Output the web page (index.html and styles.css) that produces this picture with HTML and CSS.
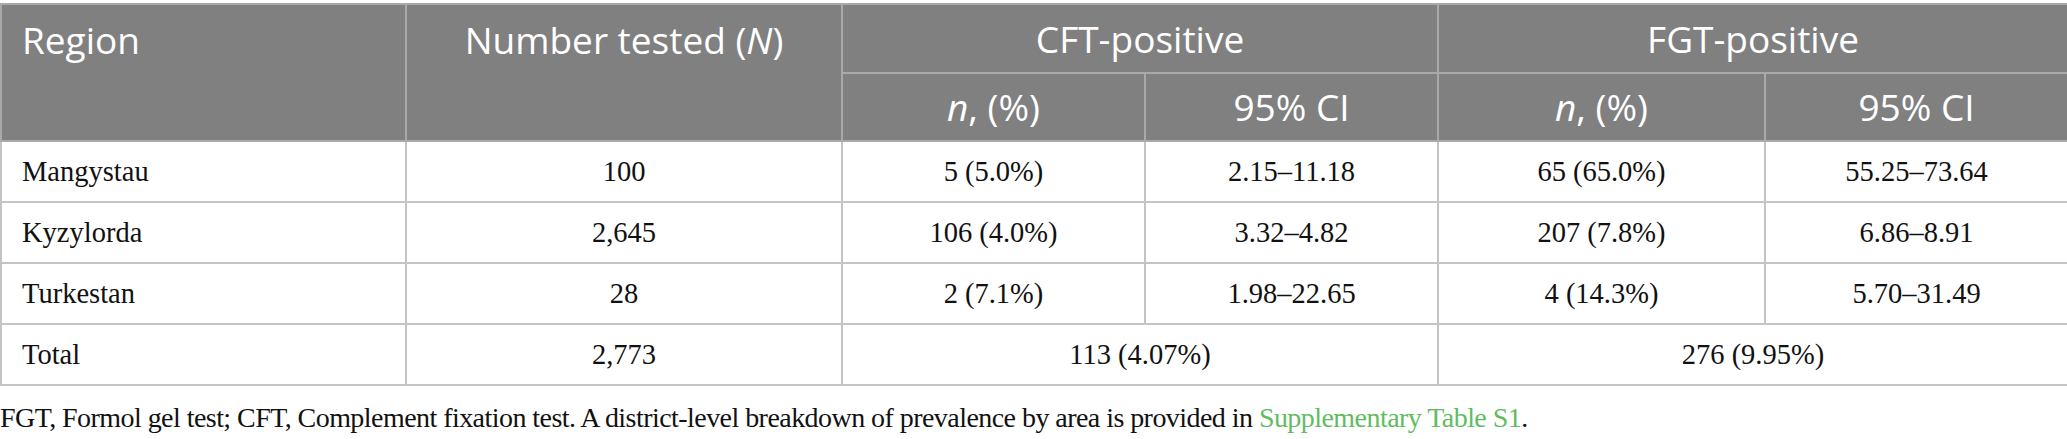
FILE: index.html
```html
<!DOCTYPE html>
<html lang="en">
<head>
<meta charset="utf-8">
<title>Table</title>
<link rel="stylesheet" href="styles.css">
</head>
<body>
<table class="data">
  <colgroup>
    <col class="c1"><col class="c2"><col class="c3"><col class="c4"><col class="c5"><col class="c6">
  </colgroup>
  <thead>
    <tr class="h1">
      <th rowspan="2" class="left top">Region</th>
      <th rowspan="2" class="top">Number tested (<i>N</i>)</th>
      <th colspan="2">CFT-positive</th>
      <th colspan="2">FGT-positive</th>
    </tr>
    <tr class="h2">
      <th><i>n</i>, (%)</th>
      <th>95% CI</th>
      <th><i>n</i>, (%)</th>
      <th>95% CI</th>
    </tr>
  </thead>
  <tbody>
    <tr>
      <td class="left">Mangystau</td><td>100</td><td>5 (5.0%)</td><td>2.15–11.18</td><td>65 (65.0%)</td><td>55.25–73.64</td>
    </tr>
    <tr>
      <td class="left">Kyzylorda</td><td>2,645</td><td>106 (4.0%)</td><td>3.32–4.82</td><td>207 (7.8%)</td><td>6.86–8.91</td>
    </tr>
    <tr>
      <td class="left">Turkestan</td><td>28</td><td>2 (7.1%)</td><td>1.98–22.65</td><td>4 (14.3%)</td><td>5.70–31.49</td>
    </tr>
    <tr>
      <td class="left">Total</td><td>2,773</td><td colspan="2">113 (4.07%)</td><td colspan="2">276 (9.95%)</td>
    </tr>
  </tbody>
</table>
<p class="note">FGT, Formol gel test; CFT, Complement fixation test. A district-level breakdown of prevalence by area is provided in <a class="link" href="#">Supplementary Table S1</a>.</p>
</body>
</html>
```
FILE: styles.css
```css
html, body {
  margin: 0;
  padding: 0;
  background: #ffffff;
}
body {
  padding-top: 3px;
}
.data {
  border-collapse: collapse;
  table-layout: fixed;
  width: 2067px;
  font-family: "Liberation Serif", "Times New Roman", serif;
  font-size: 28.5px;
  color: #111111;
}
.c1 { width: 405px; }
.c2 { width: 436px; }
.c3 { width: 303px; }
.c4 { width: 293px; }
.c5 { width: 327px; }
.c6 { width: 303px; }

.data th {
  background: #7f807f;
  color: #ffffff;
  font-family: "Open Sans", "Noto Sans", sans-serif;
  font-weight: 400;
  font-size: 37px;
  line-height: 44px;
  text-align: center;
  vertical-align: middle;
  padding: 0 20px;
  border: 2px solid #a9a9a9;
}
.data th.top {
  vertical-align: top;
  padding-top: 13px;
}
.data th i { font-style: italic; }
.data .h1 { height: 69px; }
.data .h2 { height: 68px; }
.data tbody tr { height: 61px; }
.data td {
  border: 2px solid #c4c4c4;
  text-align: center;
  vertical-align: middle;
  padding: 0 20px;
  line-height: 32px;
}
.data .left { text-align: left; }
.note {
  margin: 15px 0 0 0;
  font-family: "Liberation Serif", "Times New Roman", serif;
  font-size: 28px;
  letter-spacing: -0.55px;
  line-height: 34px;
  color: #111111;
}
.link {
  color: #5fbd5f;
  text-decoration: none;
}
```
